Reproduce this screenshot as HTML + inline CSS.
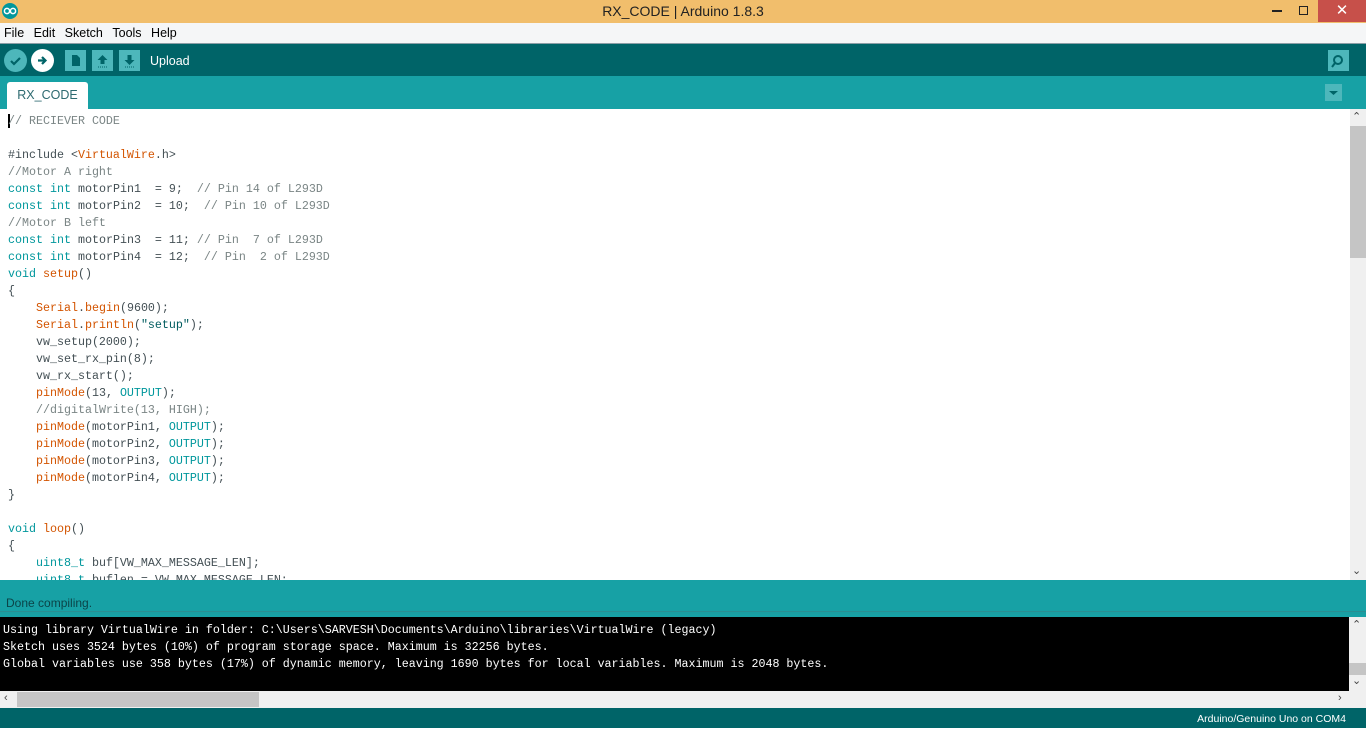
<!DOCTYPE html>
<html><head><meta charset="utf-8"><style>
*{margin:0;padding:0;box-sizing:border-box}
body{width:1366px;height:728px;overflow:hidden;position:relative;font-family:"Liberation Sans",sans-serif;background:#fff}
.abs{position:absolute}
#title{left:0;top:0;width:1366px;height:23px;background:#F1BE6C;text-align:center;font-size:14px;line-height:23px;color:#222}
#menu{left:0;top:23px;width:1366px;height:21px;background:#F5F6F7;border-bottom:1px solid #8a9ea6;font-size:12.5px;line-height:20px;color:#000}
#menu span{margin-left:4px;margin-right:2px}
#tool{left:0;top:44px;width:1366px;height:32px;background:#006468}
#tabs{left:0;top:76px;width:1366px;height:33px;background:#17A1A5}
#tab{left:7px;top:82px;width:81px;height:27px;background:#fff;border-radius:3px 3px 0 0;font-size:12.5px;color:#2d6a70;text-align:center;line-height:26px}
#ed{left:0;top:109px;width:1350px;height:471px;background:#fff;overflow:hidden}
pre{font-family:"Liberation Mono",monospace;font-size:11.67px;line-height:17px;color:#434F54}
#code{position:absolute;left:8px;top:113px}
.k{color:#00979C}.o{color:#D35400}.c{color:#7a8585}.s{color:#005C5F}
#vs{left:1350px;top:109px;width:16px;height:471px;background:#F0F0F0}
#stat{left:0;top:580px;width:1366px;height:37px;background:#17A1A5;font-size:12px;color:#0b4448;line-height:46px;padding-left:6px}
#con{left:0;top:617px;width:1349px;height:74px;background:#000}
#con pre{color:#fff;position:absolute;left:3px;top:5px;line-height:17px}
#cvs{left:1349px;top:617px;width:17px;height:74px;background:#F0F0F0}
#hs{left:0;top:691px;width:1366px;height:17px;background:#F0F0F0}
#bot{left:0;top:708px;width:1366px;height:20px;background:#006468;color:#fff;font-size:10.5px;text-align:right;padding-right:20px;line-height:22px}
.btn{position:absolute;top:49px;width:23px;height:23px;border-radius:50%}
.sq{position:absolute;top:50px;width:21px;height:21px;background:#4DB7BB}
</style></head><body>
<div id="title" class="abs">RX_CODE | Arduino 1.8.3</div>
<svg class="abs" style="left:2px;top:3px" width="16" height="16"><circle cx="8" cy="8" r="8" fill="#00979C"/><circle cx="5" cy="8" r="2.6" fill="none" stroke="#fff" stroke-width="1.5"/><circle cx="11" cy="8" r="2.6" fill="none" stroke="#fff" stroke-width="1.5"/></svg>
<div class="abs" style="left:1272px;top:10px;width:10px;height:2px;background:#222"></div>
<div class="abs" style="left:1299px;top:6px;width:9px;height:9px;border:1.5px solid #222"></div>
<div class="abs" style="left:1318px;top:0;width:48px;height:22px;background:#C7504A;color:#fff;text-align:center;font-size:15px;line-height:21px">✕</div>
<div id="menu" class="abs"><span>File</span> <span>Edit</span> <span>Sketch</span> <span>Tools</span> <span>Help</span></div>
<div id="tool" class="abs"></div>
<div class="btn" style="left:4px;background:#4DB7BB"></div>
<svg class="abs" style="left:4px;top:49px" width="23" height="23"><path d="M7 12l3 3 6-6" stroke="#006468" stroke-width="2.2" fill="none"/></svg>
<div class="btn" style="left:31px;background:#fff"></div>
<svg class="abs" style="left:31px;top:49px" width="23" height="23"><path d="M7 11.5h7M11 8l3.5 3.5L11 15" stroke="#006468" stroke-width="2.2" fill="none"/></svg>
<div class="sq" style="left:65px"></div>
<svg class="abs" style="left:65px;top:50px" width="21" height="21"><path d="M7 5h5l3 3v8H7z" fill="#006468"/></svg>
<div class="sq" style="left:92px"></div>
<svg class="abs" style="left:92px;top:50px" width="21" height="21"><path d="M10.5 5l-5 5h3v4h4v-4h3z" fill="#006468"/><path d="M6 17h9" stroke="#006468" stroke-dasharray="1 1"/></svg>
<div class="sq" style="left:119px"></div>
<svg class="abs" style="left:119px;top:50px" width="21" height="21"><path d="M10.5 15l-5-5h3V5h4v5h3z" fill="#006468"/><path d="M6 17h9" stroke="#006468" stroke-dasharray="1 1"/></svg>
<div class="abs" style="left:150px;top:54px;color:#fff;font-size:12.5px">Upload</div>
<div class="sq" style="left:1328px"></div>
<svg class="abs" style="left:1328px;top:50px" width="21" height="21"><circle cx="10" cy="10" r="4" fill="none" stroke="#006468" stroke-width="2"/><path d="M7 13l-3 4" stroke="#006468" stroke-width="2"/></svg>
<div id="tabs" class="abs"></div>
<div id="tab" class="abs">RX_CODE</div>
<div class="abs" style="left:1325px;top:84px;width:17px;height:17px;background:#4DB7BB"></div>
<svg class="abs" style="left:1325px;top:84px" width="17" height="17"><path d="M4 7h9l-4.5 4z" fill="#006468"/></svg>
<div id="ed" class="abs"></div>
<div class="abs" style="left:8px;top:114px;width:2px;height:14px;background:#000"></div>
<pre id="code"><span class="c">// RECIEVER CODE</span>

#include &lt;<span class="o">VirtualWire</span>.h&gt;
<span class="c">//Motor A right</span>
<span class="k">const</span> <span class="k">int</span> motorPin1  = 9;  <span class="c">// Pin 14 of L293D</span>
<span class="k">const</span> <span class="k">int</span> motorPin2  = 10;  <span class="c">// Pin 10 of L293D</span>
<span class="c">//Motor B left</span>
<span class="k">const</span> <span class="k">int</span> motorPin3  = 11; <span class="c">// Pin  7 of L293D</span>
<span class="k">const</span> <span class="k">int</span> motorPin4  = 12;  <span class="c">// Pin  2 of L293D</span>
<span class="k">void</span> <span class="o">setup</span>()
{
    <span class="o">Serial</span>.<span class="o">begin</span>(9600);
    <span class="o">Serial</span>.<span class="o">println</span>(<span class="s">"setup"</span>);
    vw_setup(2000);
    vw_set_rx_pin(8);
    vw_rx_start();
    <span class="o">pinMode</span>(13, <span class="k">OUTPUT</span>);
    <span class="c">//digitalWrite(13, HIGH);</span>
    <span class="o">pinMode</span>(motorPin1, <span class="k">OUTPUT</span>);
    <span class="o">pinMode</span>(motorPin2, <span class="k">OUTPUT</span>);
    <span class="o">pinMode</span>(motorPin3, <span class="k">OUTPUT</span>);
    <span class="o">pinMode</span>(motorPin4, <span class="k">OUTPUT</span>);
}

<span class="k">void</span> <span class="o">loop</span>()
{
    <span class="k">uint8_t</span> buf[VW_MAX_MESSAGE_LEN];
    <span class="k">uint8_t</span> buflen = VW_MAX_MESSAGE_LEN;
</pre>
<div id="vs" class="abs"></div>
<div class="abs" style="left:1350px;top:126px;width:16px;height:132px;background:#C5C5C5"></div>
<div class="abs" style="left:1352px;top:110px;font-size:11px;color:#444">⌃</div>
<div class="abs" style="left:1352px;top:564px;font-size:11px;color:#444">⌄</div>
<div id="stat" class="abs">Done compiling.</div>
<div class="abs" style="left:0;top:611px;width:1366px;height:3px;background:#1a9ea2;border-top:1px solid #2a8e92"></div>
<div id="con" class="abs"><pre>Using library VirtualWire in folder: C:\Users\SARVESH\Documents\Arduino\libraries\VirtualWire (legacy)
Sketch uses 3524 bytes (10%) of program storage space. Maximum is 32256 bytes.
Global variables use 358 bytes (17%) of dynamic memory, leaving 1690 bytes for local variables. Maximum is 2048 bytes.</pre></div>
<div id="cvs" class="abs"></div>
<div class="abs" style="left:1349px;top:663px;width:17px;height:12px;background:#C5C5C5"></div>
<div class="abs" style="left:1352px;top:618px;font-size:11px;color:#444">⌃</div>
<div class="abs" style="left:1352px;top:674px;font-size:11px;color:#444">⌄</div>
<div id="hs" class="abs"></div>
<div class="abs" style="left:17px;top:692px;width:242px;height:15px;background:#C5C5C5"></div>
<div class="abs" style="left:4px;top:692px;font-size:11px;color:#444">‹</div>
<div class="abs" style="left:1338px;top:692px;font-size:11px;color:#444">›</div>
<div id="bot" class="abs">Arduino/Genuino Uno on COM4</div>
</body></html>
